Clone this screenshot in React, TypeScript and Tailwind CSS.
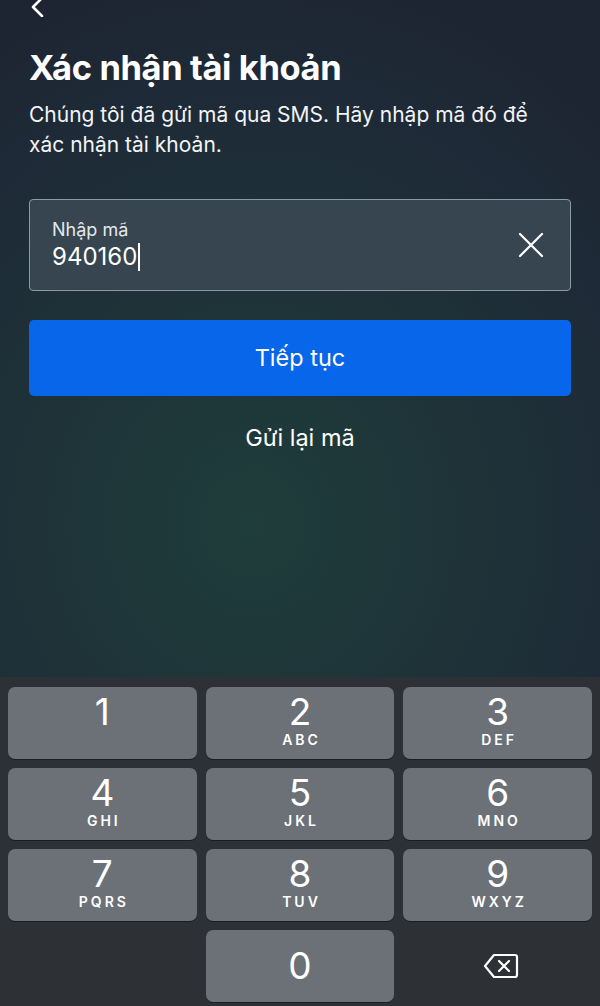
import React from "react";

const keys: { d: string; l: string }[] = [
  { d: "1", l: "" },
  { d: "2", l: "ABC" },
  { d: "3", l: "DEF" },
  { d: "4", l: "GHI" },
  { d: "5", l: "JKL" },
  { d: "6", l: "MNO" },
  { d: "7", l: "PQRS" },
  { d: "8", l: "TUV" },
  { d: "9", l: "WXYZ" },
];

function Key({ d, l }: { d: string; l: string }) {
  return (
    <div className="h-[72px] rounded-[7px] bg-[#6b7176] shadow-[0_1px_0_#1a1c1f] flex flex-col items-center pt-[5px] text-white">
      <div className="text-[37px] leading-[40px] font-normal">{d}</div>
      <div className="text-[14px] leading-[16px] font-semibold tracking-[3px] pl-[3px]">{l}</div>
    </div>
  );
}

export default function App() {
  return (
    <div
      className="w-[600px] h-[1006px] overflow-hidden flex flex-col text-white bg-[radial-gradient(ellipse_85%_55%_at_42%_52%,#1f3d3b_0%,#1e3238_45%,#1e2a37_80%,#1e2532_100%)]"
      style={{ fontFamily: "Inter, 'Noto Sans', sans-serif" }}
    >
      <div className="flex-1 px-[29px] flex flex-col">
        <div className="h-[20px] -mt-[3px]">
          <svg width="16" height="20" viewBox="0 0 16 20" fill="none">
            <path d="M13 1 L4 10 L13 19" stroke="white" strokeWidth="2.6" strokeLinecap="round" strokeLinejoin="round" />
          </svg>
        </div>
        <h1 className="mt-[30px] text-[34.5px] leading-[42px] font-bold tracking-[-0.4px]">Xác nhận tài khoản</h1>
        <p className="mt-[11px] max-w-[515px] text-[21px] leading-[30px] text-[#f2f4f6]">
          Chúng tôi đã gửi mã qua SMS. Hãy nhập mã đó để xác nhận tài khoản.
        </p>
        <div className="mt-[39px] h-[92px] rounded-[4px] border-[1.5px] border-[#8d99a3] bg-[#364550] flex items-center pl-[22px] pr-[26px]">
          <div className="flex-1 flex flex-col pt-[2px]">
            <span className="text-[18px] leading-[22px] text-[#e4e8eb]">Nhập mã</span>
            <span className="text-[24px] leading-[32px] flex items-center">
              940160
              <span className="inline-block w-[2px] h-[28px] bg-white ml-[1px]" />
            </span>
          </div>
          <svg width="26" height="26" viewBox="0 0 26 26" fill="none">
            <path d="M2 2 L24 24 M24 2 L2 24" stroke="white" strokeWidth="2.2" strokeLinecap="round" />
          </svg>
        </div>
        <button className="mt-[29px] h-[76px] rounded-[5px] bg-[#0866ea] text-[23.5px] text-white flex items-center justify-center">
          Tiếp tục
        </button>
        <div className="mt-[26px] text-center text-[23.5px] leading-[32px]">Gửi lại mã</div>
      </div>
      <div className="h-[329px] bg-[#2d3035] px-[8px] pt-[10px] grid grid-cols-3 gap-x-[9px] gap-y-[9px] content-start">
        {keys.map((k) => (
          <Key key={k.d} d={k.d} l={k.l} />
        ))}
        <div />
        <div className="h-[72px] rounded-[7px] bg-[#6b7176] shadow-[0_1px_0_#1a1c1f] flex items-center justify-center text-white text-[37px]">
          0
        </div>
        <div className="h-[72px] flex items-center justify-center pl-[7px]">
          <svg width="36" height="26" viewBox="0 0 36 26" fill="none">
            <path d="M11 2 H32 a2 2 0 0 1 2 2 V22 a2 2 0 0 1 -2 2 H11 L2 13 Z" stroke="white" strokeWidth="2.2" strokeLinejoin="round" />
            <path d="M16 8 L26 18 M26 8 L16 18" stroke="white" strokeWidth="2.2" strokeLinecap="round" />
          </svg>
        </div>
      </div>
    </div>
  );
}
